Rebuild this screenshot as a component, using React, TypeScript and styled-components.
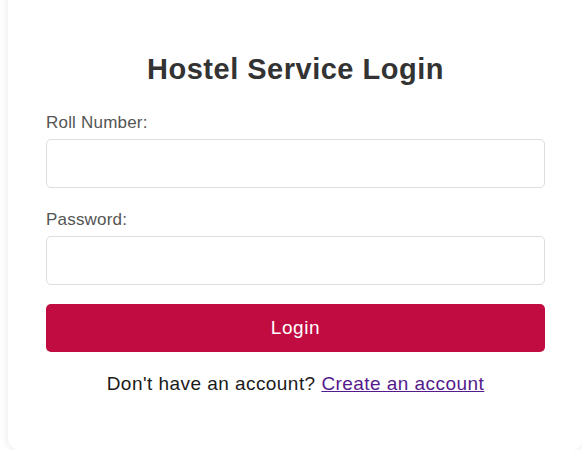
import styled, { createGlobalStyle } from "styled-components";

const GlobalStyle = createGlobalStyle`
    html, body {
        margin: 0;
        padding: 0;
        background: #ffffff;
        overflow: hidden;
        font-family: "Liberation Sans", Arial, sans-serif;
    }
`;

const Page = styled.div`
    padding-left: 8px;
`;

const Card = styled.div`
    box-sizing: border-box;
    width: 575px;
    margin-top: -14px;
    padding: 67px 38px 55px;
    background: #ffffff;
    border-radius: 12px;
    box-shadow: 0 0 10px rgba(0, 0, 0, 0.1);
`;

const Title = styled.h2`
    margin: 0 0 27px;
    text-align: center;
    font-size: 29px;
    font-weight: bold;
    letter-spacing: 0.5px;
    color: #333333;
`;

const Form = styled.form`
    display: flex;
    flex-direction: column;
`;

const Field = styled.div`
    display: flex;
    flex-direction: column;
    gap: 6px;
    margin-bottom: 22px;

    & + & {
        margin-bottom: 19px;
    }
`;

const Label = styled.label`
    font-size: 17px;
    letter-spacing: 0.2px;
    color: #555555;
`;

const Input = styled.input`
    box-sizing: border-box;
    height: 49px;
    width: 100%;
    padding: 10px;
    border: 1px solid #dddddd;
    border-radius: 5px;
    font-size: 16px;
    font-family: inherit;
    outline: none;
`;

const SubmitButton = styled.button`
    height: 48px;
    border: none;
    border-radius: 5px;
    background: #c10c42;
    color: #ffffff;
    font-size: 19px;
    letter-spacing: 0.6px;
    font-family: inherit;
    cursor: pointer;
`;

const Footer = styled.p`
    margin: 21px 0 0;
    text-align: center;
    font-size: 19px;
    letter-spacing: 0.45px;
    color: #1a1a1a;
`;

const Link = styled.a`
    color: #551a8b;
    text-decoration: underline;
`;

export default function App() {
    return (
        <>
            <GlobalStyle />
            <Page>
                <Card>
                    <Title>Hostel Service Login</Title>
                    <Form onSubmit={e => e.preventDefault()}>
                        <Field>
                            <Label htmlFor="roll">Roll Number:</Label>
                            <Input id="roll" type="text" />
                        </Field>
                        <Field>
                            <Label htmlFor="password">Password:</Label>
                            <Input id="password" type="password" />
                        </Field>
                        <SubmitButton type="submit">Login</SubmitButton>
                    </Form>
                    <Footer>
                        Don't have an account? <Link href="#signup">Create an account</Link>
                    </Footer>
                </Card>
            </Page>
        </>
    );
}
